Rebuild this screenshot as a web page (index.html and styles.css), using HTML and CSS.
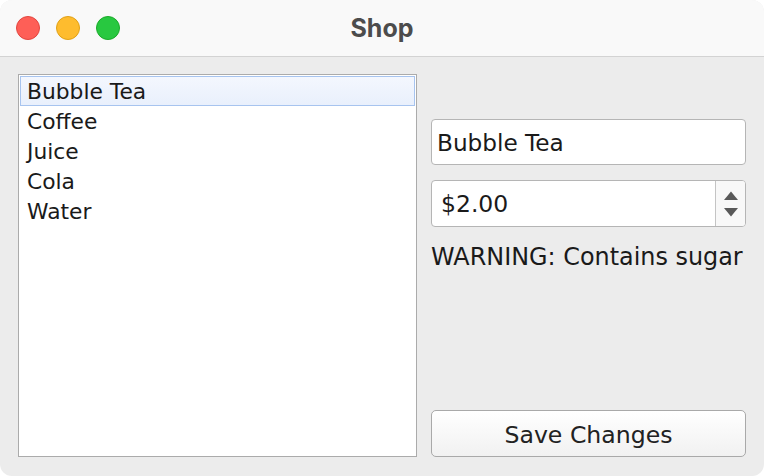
FILE: index.html
```html
<!DOCTYPE html>
<html>
<head>
<meta charset="utf-8">
<link rel="stylesheet" href="styles.css">
</head>
<body>
<div class="window">
  <div class="titlebar">
    <div class="lights">
      <span class="light red"></span>
      <span class="light yellow"></span>
      <span class="light green"></span>
    </div>
    <div class="title">Shop</div>
  </div>
  <div class="content">
    <div class="list">
      <div class="item selected">Bubble Tea</div>
      <div class="item">Coffee</div>
      <div class="item">Juice</div>
      <div class="item">Cola</div>
      <div class="item">Water</div>
    </div>
    <div class="side">
      <div class="field">Bubble Tea</div>
      <div class="spin">
        <div class="spin-value">$2.00</div>
        <div class="spin-arrows">
          <svg width="16" height="36" viewBox="0 0 16 36">
            <path d="M8 5.5 L15 14 L1 14 Z" fill="#595959"/>
            <path d="M8 30.5 L15 22 L1 22 Z" fill="#595959"/>
          </svg>
        </div>
      </div>
      <div class="warning">WARNING: Contains sugar</div>
      <div class="button">Save Changes</div>
    </div>
  </div>
</div>
</body>
</html>
```
FILE: styles.css
```css
html, body {
  margin: 0;
  padding: 0;
  background: #ffffff;
}
body {
  width: 764px;
  height: 476px;
  overflow: hidden;
  font-family: "DejaVu Sans", sans-serif;
  color: #1a1a1a;
}
.window {
  width: 764px;
  height: 476px;
  border-radius: 12px;
  overflow: hidden;
  background: #ececec;
  display: flex;
  flex-direction: column;
}
.titlebar {
  height: 56px;
  flex: none;
  background: #f9f9f9;
  border-bottom: 1px solid #d3d3d3;
  display: flex;
  align-items: center;
  position: relative;
}
.lights {
  display: flex;
  gap: 16px;
  padding-left: 16px;
}
.light {
  width: 24px;
  height: 24px;
  border-radius: 50%;
  box-sizing: border-box;
}
.red { background: #fe5f57; border: 1px solid #e2463f; }
.yellow { background: #febc2e; border: 1px solid #e1a116; }
.green { background: #28c840; border: 1px solid #1aab29; }
.title {
  position: absolute;
  left: 0;
  right: 0;
  top: 0;
  bottom: 0;
  display: flex;
  align-items: center;
  justify-content: center;
  font-family: Inter, "Liberation Sans", sans-serif;
  font-weight: 700;
  font-size: 25px;
  color: #4c4c4c;
}
.content {
  flex: 1;
  display: flex;
  gap: 14px;
  padding: 17px 18px 19px 18px;
}
.list {
  width: 399px;
  flex: none;
  background: #ffffff;
  border: 1px solid #ababab;
  padding: 1px;
  box-sizing: border-box;
  height: 383px;
}
.item {
  height: 30px;
  line-height: 32px;
  padding-left: 7px;
  font-size: 21.8px;
  box-sizing: border-box;
}
.item.selected {
  background: linear-gradient(#f4f7fe, #e9f0fc);
  border: 1px solid #a7c4ef;
  line-height: 30px;
  padding-left: 6px;
}
.side {
  flex: 1;
  display: flex;
  flex-direction: column;
  padding-top: 45px;
}
.field {
  height: 46px;
  box-sizing: border-box;
  background: #ffffff;
  border: 1px solid #b5b5b5;
  border-radius: 4px;
  font-size: 23.2px;
  line-height: 46px;
  padding-left: 5px;
}
.spin {
  margin-top: 15px;
  height: 47px;
  box-sizing: border-box;
  border: 1px solid #b5b5b5;
  border-radius: 4px;
  background: #ffffff;
  display: flex;
}
.spin-value {
  flex: 1;
  font-size: 23.5px;
  line-height: 47px;
  padding-left: 9px;
  border-right: 1px solid #c4c4c4;
}
.spin-arrows {
  width: 29px;
  display: flex;
  align-items: center;
  justify-content: center;
  background: #f8f8f8;
  border-radius: 0 3px 3px 0;
}
.warning {
  margin-top: 16px;
  font-size: 23.9px;
  line-height: 28px;
}
.button {
  margin-top: auto;
  height: 47px;
  box-sizing: border-box;
  border: 1px solid #a9a9a9;
  border-radius: 5px;
  background: linear-gradient(#ffffff, #f1f1f1);
  font-size: 23.6px;
  line-height: 48px;
  text-align: center;
  color: #222222;
}
```
